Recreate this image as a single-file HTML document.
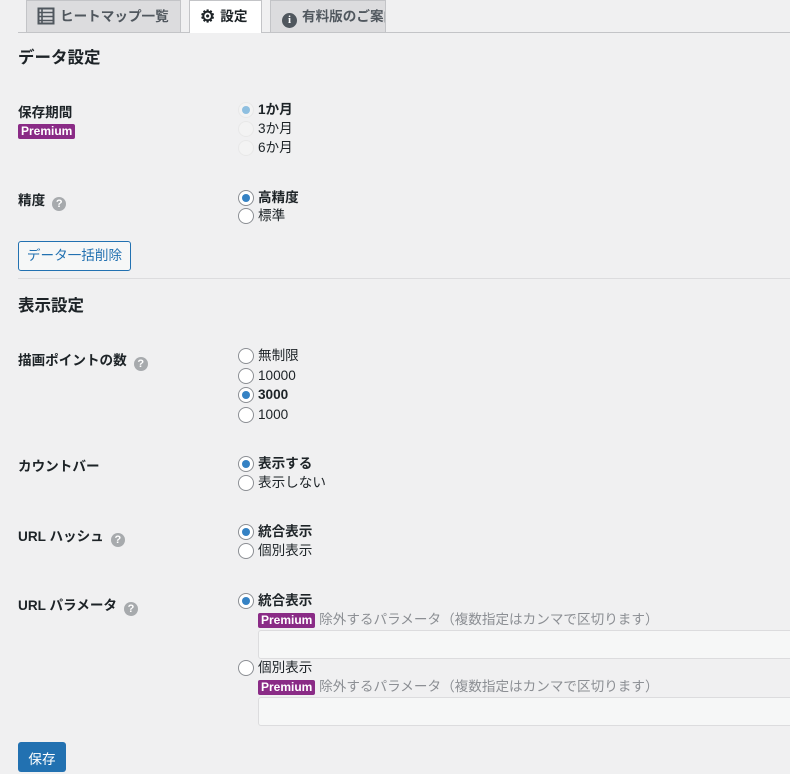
<!DOCTYPE html>
<html><head><meta charset="utf-8"><style>
body{margin:0;width:790px;height:752px;background:#f0f0f1;font-family:"Liberation Sans","Noto Sans CJK JP",sans-serif;font-size:13.6px;color:#1d2327;position:relative;overflow:hidden}
.a{position:absolute;white-space:nowrap;line-height:18px;height:18px}
.b{font-weight:bold}
.tab{position:absolute;top:0;height:32px;box-sizing:border-box;border:1px solid #c3c4c7;border-bottom:none;background:#dcdcde;font-weight:bold;font-size:13.6px;line-height:31px;color:#50575e;padding-left:10px;white-space:nowrap;overflow:hidden}
.r{position:absolute;left:238px;width:16px;height:16px;box-sizing:border-box;border:1px solid #8c8f94;border-radius:50%;background:#fff}
.r.c::after{content:"";position:absolute;left:3px;top:3px;width:8px;height:8px;border-radius:50%;background:#3582c4}
.r.d{border-color:#e8e8e8;background:#f3f3f3}
.pm{display:inline-block;background:#8a2b86;color:#fff;font-weight:bold;font-size:12px;line-height:15px;padding:0 3px;border-radius:2px}
.q{display:inline-block;width:14px;height:14px;border-radius:50%;background:#a7aaad;color:#fff;font-size:11px;line-height:14px;text-align:center;font-weight:bold;vertical-align:-2px;margin-left:7px}
h2{position:absolute;margin:0;font-size:16.5px;left:18px;line-height:20px}
.inp{position:absolute;left:258px;width:540px;height:29px;box-sizing:border-box;border:1px solid #dcdcde;border-radius:3px;background:#f6f7f7}
.g{color:#8c8f94}
</style></head><body>
<div style="position:absolute;left:18px;right:0;top:32px;border-top:1px solid #c3c4c7"></div>
<div class="tab" style="left:26px;width:155px;padding-left:10px"><svg width="18" height="18" viewBox="0 0 18 18" style="vertical-align:-4px;margin-right:5px"><rect x="1.5" y="1.5" width="15" height="15" fill="none" stroke="#50575e" stroke-width="2"/><path d="M5 1v16M1 5.5h16M1 9.5h16M1 13.5h16" stroke="#50575e" stroke-width="1.6"/></svg>ヒートマップ一覧</div>
<div class="tab" style="left:189px;width:73px;height:33px;color:#1d2327;background:#fff"><span style="font-size:17px;vertical-align:-1px;margin-right:5px">⚙</span>設定</div>
<div class="tab" style="left:270px;width:116px;padding-left:11px"><span style="display:inline-block;width:15px;height:15px;border-radius:50%;background:#50575e;color:#fff;font-size:11px;line-height:15px;text-align:center;vertical-align:-2px;margin-right:5px;font-family:'Liberation Serif',serif">i</span>有料版のご案内</div>

<h2 style="top:48px">データ設定</h2>
<div class="a b" style="left:18px;top:104px">保存期間</div>
<div class="a" style="left:18px;top:122px"><span class="pm">Premium</span></div>
<div class="r d" style="top:102px"><span style="position:absolute;left:3px;top:3px;width:8px;height:8px;border-radius:50%;background:#8ebfe0"></span></div><div class="a b" style="left:258px;top:101px">1か月</div>
<div class="r d" style="top:121px"></div><div class="a" style="left:258px;top:120px">3か月</div>
<div class="r d" style="top:140px"></div><div class="a" style="left:258px;top:139px">6か月</div>

<div class="a b" style="left:18px;top:192px">精度<span class="q">?</span></div>
<div class="r c" style="top:190px"></div><div class="a b" style="left:258px;top:189px">高精度</div>
<div class="r" style="top:208px"></div><div class="a" style="left:258px;top:207px">標準</div>

<div style="position:absolute;left:18px;top:241px;width:113px;height:30px;box-sizing:border-box;border:1px solid #2271b1;border-radius:3px;background:#f6f7f7;color:#2271b1;line-height:28px;text-align:center">データ一括削除</div>
<div style="position:absolute;left:18px;right:0;top:278px;border-top:1px solid #dcdcde"></div>

<h2 style="top:296px">表示設定</h2>
<div class="a b" style="left:18px;top:352px">描画ポイントの数<span class="q">?</span></div>
<div class="r" style="top:348px"></div><div class="a" style="left:258px;top:347px">無制限</div>
<div class="r" style="top:368px"></div><div class="a" style="left:258px;top:367px">10000</div>
<div class="r c" style="top:387px"></div><div class="a b" style="left:258px;top:386px">3000</div>
<div class="r" style="top:407px"></div><div class="a" style="left:258px;top:406px">1000</div>

<div class="a b" style="left:18px;top:458px">カウントバー</div>
<div class="r c" style="top:456px"></div><div class="a b" style="left:258px;top:455px">表示する</div>
<div class="r" style="top:475px"></div><div class="a" style="left:258px;top:474px">表示しない</div>

<div class="a b" style="left:18px;top:528px">URL ハッシュ<span class="q">?</span></div>
<div class="r c" style="top:524px"></div><div class="a b" style="left:258px;top:523px">統合表示</div>
<div class="r" style="top:543px"></div><div class="a" style="left:258px;top:542px">個別表示</div>

<div class="a b" style="left:18px;top:597px">URL パラメータ<span class="q">?</span></div>
<div class="r c" style="top:593px"></div><div class="a b" style="left:258px;top:592px">統合表示</div>
<div class="a g" style="left:258px;top:611px"><span class="pm">Premium</span> 除外するパラメータ（複数指定はカンマで区切ります）</div>
<div class="inp" style="top:630px"></div>
<div class="r" style="top:660px"></div><div class="a" style="left:258px;top:659px">個別表示</div>
<div class="a g" style="left:258px;top:678px"><span class="pm">Premium</span> 除外するパラメータ（複数指定はカンマで区切ります）</div>
<div class="inp" style="top:697px"></div>

<div style="position:absolute;left:18px;top:742px;width:48px;height:30px;background:#2271b1;border-radius:3px;color:#fff;text-align:center;line-height:28px;padding-top:4px;box-sizing:border-box">保存</div>
</body></html>
